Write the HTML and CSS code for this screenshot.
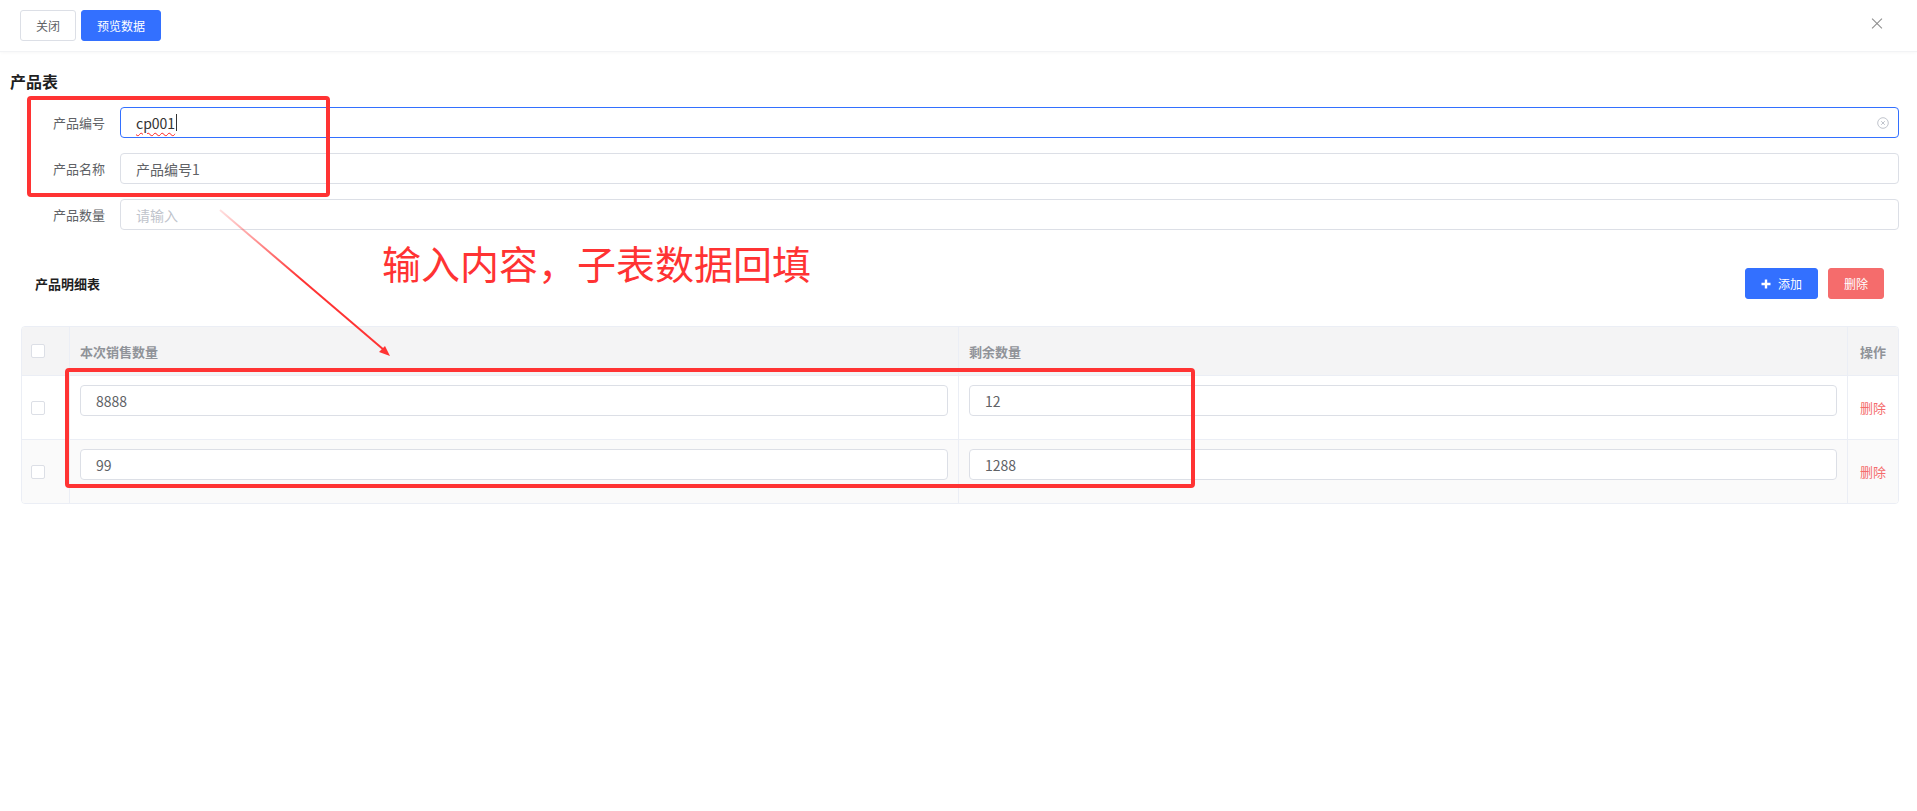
FILE: index.html
```html
<!DOCTYPE html>
<html lang="zh-CN">
<head>
  <meta charset="UTF-8">
  <meta name="viewport" content="width=device-width, initial-scale=1.0">
  <title>产品表</title>
  <link rel="stylesheet" href="styles.css">
</head>
<body>

  <div class="topbar">
    <div class="topbar-btns">
      <button class="btn btn-plain">关闭</button>
      <button class="btn btn-primary">预览数据</button>
    </div>
    <span class="close-x"></span>
  </div>

  <div class="page">
    <h1 class="form-title">产品表</h1>

    <div class="form">
      <div class="form-item">
        <label>产品编号</label>
        <div class="input is-focus">
          <span class="value"><span class="typo">cp001</span><span class="caret"></span></span>
          <svg class="clear-icon" width="12" height="12" viewBox="0 0 12 12">
            <circle cx="6" cy="6" r="5.3" fill="none" stroke="#c0c4cc" stroke-width="1"/>
            <path d="M4.2 4.2 L7.8 7.8 M7.8 4.2 L4.2 7.8" stroke="#c0c4cc" stroke-width="1"/>
          </svg>
        </div>
      </div>
      <div class="form-item">
        <label>产品名称</label>
        <div class="input"><span class="value">产品编号1</span></div>
      </div>
      <div class="form-item">
        <label>产品数量</label>
        <div class="input"><span class="placeholder">请输入</span></div>
      </div>
    </div>

    <div class="sub-head">
      <span class="sub-title">产品明细表</span>
      <div class="sub-btns">
        <button class="btn btn-primary btn-add">
          <svg width="10" height="10" viewBox="0 0 10 10"><path d="M5 0.5 V9.5 M0.5 5 H9.5" stroke="#fff" stroke-width="2.4"/></svg>
          添加
        </button>
        <button class="btn btn-danger">删除</button>
      </div>
    </div>

    <div class="table">
      <div class="tr thead">
        <div class="td td-check"><span class="checkbox"></span></div>
        <div class="td">本次销售数量</div>
        <div class="td">剩余数量</div>
        <div class="td td-op">操作</div>
      </div>
      <div class="tr">
        <div class="td td-check"><span class="checkbox"></span></div>
        <div class="td td-field"><div class="input"><span class="value">8888</span></div></div>
        <div class="td td-field"><div class="input"><span class="value">12</span></div></div>
        <div class="td td-op"><a class="link-del">删除</a></div>
      </div>
      <div class="tr tr-stripe">
        <div class="td td-check"><span class="checkbox"></span></div>
        <div class="td td-field"><div class="input"><span class="value">99</span></div></div>
        <div class="td td-field"><div class="input"><span class="value">1288</span></div></div>
        <div class="td td-op"><a class="link-del">删除</a></div>
      </div>
    </div>
  </div>

  <!-- 标注 -->
  <div class="mark mark-form"></div>
  <div class="mark mark-rows"></div>
  <div class="mark-text">输入内容，子表数据回填</div>
  <svg class="mark-arrow" width="1917" height="811" viewBox="0 0 1917 811">
    <defs>
      <linearGradient id="fade" gradientUnits="userSpaceOnUse" x1="220" y1="210" x2="300" y2="280">
        <stop offset="0" stop-color="#ff3333" stop-opacity="0.15"/>
        <stop offset="1" stop-color="#ff3333" stop-opacity="1"/>
      </linearGradient>
    </defs>
    <line x1="220" y1="210" x2="384" y2="350" stroke="url(#fade)" stroke-width="2"/>
    <path d="M390 356 L379 352 L385 346 Z" fill="#ff3333"/>
  </svg>

</body>
</html>
```

FILE: styles.css
```css
* {
  margin: 0;
  padding: 0;
  box-sizing: border-box;
}

body {
  position: relative;
  font-family: "Noto Sans CJK SC", "Liberation Sans", sans-serif;
  background-color: #fff;
  color: #606266;
  width: 1917px;
  height: 811px;
  overflow: hidden;
}

button {
  font-family: inherit;
}

.topbar {
  height: 52px;
  padding: 10px 20px;
  display: flex;
  justify-content: space-between;
  align-items: flex-start;
  border-bottom: 1px solid #f2f3f5;
  box-shadow: 0 1px 3px rgba(0, 0, 0, 0.03);
}

.topbar-btns {
  display: flex;
  gap: 5px;
}

.btn {
  height: 31px;
  padding: 0 15px;
  border-radius: 3px;
  font-size: 12px;
  border: 1px solid transparent;
  cursor: pointer;
  display: inline-flex;
  align-items: center;
  justify-content: center;
}

.btn-plain {
  width: 56px;
  background-color: #fff;
  border-color: #dcdfe6;
  color: #606266;
}

.btn-primary {
  width: 80px;
  background-color: #3370ff;
  border-color: #3370ff;
  color: #fff;
}

.btn-danger {
  width: 56px;
  background-color: #f56c6c;
  border-color: #f56c6c;
  color: #fff;
}

.btn-add {
  width: 73px;
  gap: 7px;
}

.close-x {
  position: relative;
  width: 14px;
  height: 14px;
  margin: 7px 13px 0 0;
}

.close-x::before,
.close-x::after {
  content: "";
  position: absolute;
  left: 0;
  top: 6px;
  width: 14px;
  height: 1px;
  background-color: #8c8c8c;
  transform: rotate(45deg);
}

.close-x::after {
  transform: rotate(-45deg);
}

.page {
  padding: 18px 18px 0 10px;
}

.form-title {
  font-size: 16px;
  font-weight: bold;
  color: #1f1f1f;
  line-height: 22px;
  margin-bottom: 15px;
}

.form-item {
  display: flex;
  align-items: center;
  margin-bottom: 15px;
}

.form-item:last-child {
  margin-bottom: 0;
}

.form-item label {
  width: 110px;
  padding-right: 15px;
  text-align: right;
  font-size: 13px;
  color: #606266;
}

.input {
  flex: 1;
  height: 31px;
  display: flex;
  align-items: center;
  padding: 0 15px;
  border: 1px solid #dcdfe6;
  border-radius: 4px;
  background-color: #fff;
  font-size: 14px;
  color: #606266;
}

.input.is-focus {
  border-color: #3370ff;
}

.input .value {
  flex: 1;
  display: flex;
  align-items: center;
}

.typo {
  color: #333;
  text-decoration: underline wavy #ff2020;
  text-decoration-thickness: 1px;
  text-underline-offset: 3px;
}

.caret {
  display: inline-block;
  width: 1px;
  height: 17px;
  margin-left: 1px;
  background-color: #333;
}

.placeholder {
  color: #c0c4cc;
}

.clear-icon {
  margin-right: -6px;
}

.sub-head {
  display: flex;
  justify-content: space-between;
  align-items: center;
  margin-top: 38px;
  padding: 0 15px 0 25px;
}

.sub-title {
  font-size: 13px;
  font-weight: 600;
  color: #1f1f1f;
}

.sub-btns {
  display: flex;
  gap: 10px;
}

.table {
  margin: 27px 0 0 11px;
  border: 1px solid #ebeef5;
  border-radius: 4px;
  overflow: hidden;
}

.tr {
  display: grid;
  grid-template-columns: 48px 1fr 1fr 50px;
  border-bottom: 1px solid #ebeef5;
}

.tr:last-child {
  border-bottom: none;
}

.thead {
  height: 49px;
  background-color: #f4f4f5;
  font-size: 13px;
  font-weight: 600;
  color: #909399;
}

.td {
  border-right: 1px solid #ebeef5;
  padding: 0 10px;
  display: flex;
  align-items: center;
}

.td:last-child {
  border-right: none;
}

.td-check {
  padding-left: 9px;
}

.td-op {
  justify-content: center;
  padding: 0;
}

.td-field {
  padding: 9px 10px 23px;
  align-items: flex-start;
}

.tr-stripe {
  background-color: #fafafa;
}

.checkbox {
  width: 14px;
  height: 14px;
  border: 1px solid #dcdfe6;
  border-radius: 2px;
  background-color: #fff;
}

.link-del {
  font-size: 13px;
  color: #f56c6c;
  cursor: pointer;
}

.mark {
  position: absolute;
  border: 4px solid #ff3333;
  border-radius: 4px;
  pointer-events: none;
}

.mark-form {
  left: 27px;
  top: 96px;
  width: 303px;
  height: 101px;
}

.mark-rows {
  left: 65px;
  top: 368px;
  width: 1130px;
  height: 120px;
}

.mark-text {
  position: absolute;
  left: 382px;
  top: 243px;
  font-size: 39px;
  line-height: 1;
  color: #ff3333;
  white-space: nowrap;
}

.mark-arrow {
  position: absolute;
  left: 0;
  top: 0;
  pointer-events: none;
}
```
